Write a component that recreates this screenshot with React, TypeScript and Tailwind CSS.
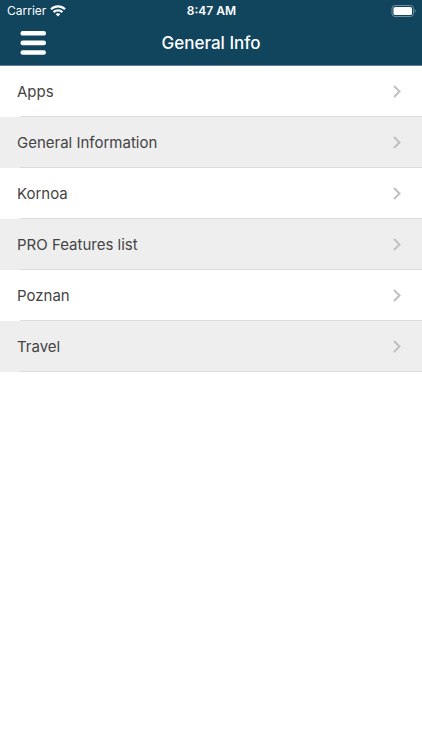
import React from "react";

const items = ["Apps", "General Information", "Kornoa", "PRO Features list", "Poznan", "Travel"];

function StatusBar() {
  return (
    <div className="grid h-[22px] grid-cols-3 items-center pl-[7px] pr-[6px] text-xs leading-4">
      <div className="flex items-center gap-1">
        <span>Carrier</span>
        <svg width="16" height="12" viewBox="0 0 16 12" fill="none" stroke="currentColor" strokeWidth="2.2" aria-hidden="true">
          <path d="M1 4.3C5 .4 11 .4 15 4.3" />
          <path d="M3.6 7.1C6.1 4.7 9.9 4.7 12.4 7.1" />
          <path d="M5.6 9.1C7 7.8 9 7.8 10.4 9.1L8 11.6Z" fill="currentColor" stroke="none" />
        </svg>
      </div>
      <span className="text-center font-semibold">8:47 AM</span>
      <svg className="justify-self-end" width="25" height="12" viewBox="0 0 25 12" fill="none" aria-hidden="true">
        <rect x="1" y="0.5" width="21.5" height="11" rx="3" stroke="#6f8fa0" />
        <rect x="2.5" y="2" width="18.5" height="8" rx="1.6" fill="white" />
        <path d="M23.6 4C25 4.6 25 7.4 23.6 8Z" fill="#6f8fa0" />
      </svg>
    </div>
  );
}

export default function App() {
  return (
    <div className="min-h-screen bg-white font-[Inter,'Liberation_Sans',sans-serif]">
      <header className="border-b border-[#5f7f90] bg-[#11445d] text-white">
        <StatusBar />
        <div className="grid h-[43px] grid-cols-[48px_1fr_48px] items-center pb-0.5">
          <button type="button" aria-label="Menu" className="justify-self-end pr-[2px]">
            <svg width="26" height="24" viewBox="0 0 26 24" fill="white" aria-hidden="true">
              <rect x="0.5" width="25.5" height="4.6" rx="2.2" />
              <rect x="0.5" y="9.6" width="25.5" height="4.6" rx="2.2" />
              <rect x="0.5" y="19.2" width="25.5" height="4.6" rx="2.2" />
            </svg>
          </button>
          <h1 className="text-center text-[17px] font-medium leading-5">General Info</h1>
        </div>
      </header>
      <main>
        <ul>
          {items.map((label) => (
            <li key={label} className="odd:bg-white even:bg-[#eeeeee]">
              <a href="#" className="flex h-[50px] items-center justify-between pl-[17px] pr-[21px] text-[15px] leading-6 text-[#444444]">
                <span className="pt-0.5">{label}</span>
                <svg width="8" height="13" viewBox="0 0 8 13" fill="none" stroke="#c0c0c3" strokeWidth="2" aria-hidden="true">
                  <path d="M1 1L6.5 6.5L1 12" />
                </svg>
              </a>
              <div className="ml-5 h-px bg-[#dcdcdd]" />
            </li>
          ))}
        </ul>
      </main>
    </div>
  );
}
